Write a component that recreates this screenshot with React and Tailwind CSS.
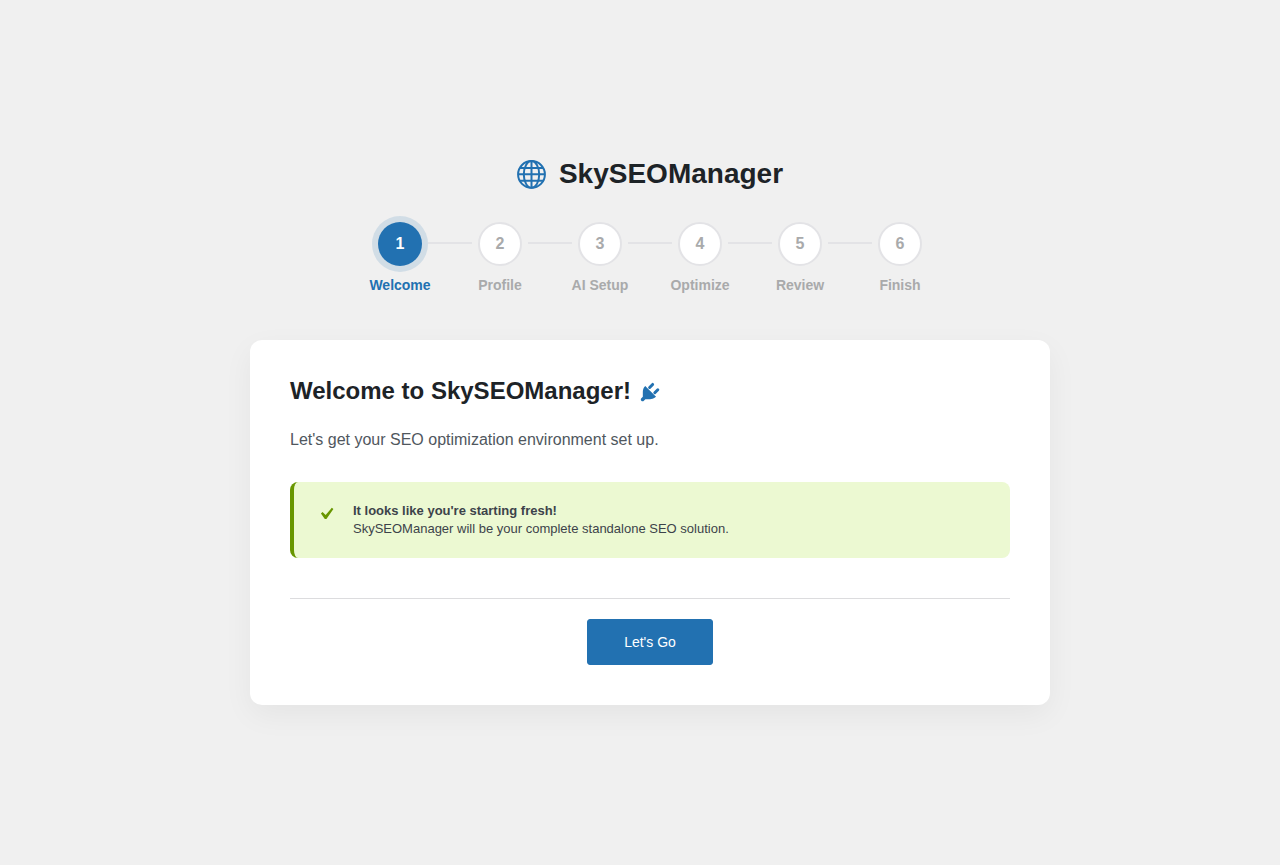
import React, { useState } from 'react';

const steps = ['Welcome', 'Profile', 'AI Setup', 'Optimize', 'Review', 'Finish'];

function GlobeIcon() {
    return (
        <svg width="30" height="32" viewBox="0 0 30 32" fill="none" stroke="#2271b1" strokeWidth="2" aria-hidden="true">
            <circle cx="14.5" cy="16.4" r="13.4" />
            <ellipse cx="14.5" cy="16.4" rx="7.7" ry="13.4" />
            <path d="M14.5 3v26.8M1 16.2h27M3 10h23M3 22.8h23" />
        </svg>
    );
}

function PlugIcon() {
    return (
        <svg width="24" height="24" viewBox="0 0 20 20" fill="#2271b1" aria-hidden="true">
            <path d="M5.11 6.13l.91-1.12 9.01 9.01-1.19.84c-.71.71-2.63 1.16-3.82 1.16H6.14L4.9 17.26c-.59.59-1.54.59-2.12 0-.59-.58-.59-1.53 0-2.12l1.24-1.24v-3.88c0-1.13.4-3.19 1.09-3.89z" />
            <path d="M9.7 6.2l2.5-2.5M14 10.6l2.5-2.5" stroke="#2271b1" strokeWidth="2.5" strokeLinecap="round" />
        </svg>
    );
}

function CheckIcon() {
    return (
        <svg className="shrink-0" width="24" height="24" viewBox="0 0 20 20" fill="#689600" aria-hidden="true">
            <path d="M14.83 4.89l1.34.94-5.81 8.38H9.02L5.78 9.67l1.34-1.25 2.57 2.4z" />
        </svg>
    );
}

function Step({ label, index, current }) {
    const active = index === current;
    const line = 'mt-5 h-0.5 flex-1';

    return (
        <li className="w-[100px]" aria-current={active ? 'step' : undefined}>
            <div className="flex items-start gap-1.5">
                <span className={line + (index > 0 ? ' bg-[#e3e3e6]' : '')}></span>
                <span
                    className={
                        'flex size-11 items-center justify-center rounded-full text-base font-bold ' +
                        (active
                            ? 'bg-[#2271b1] text-white shadow-[0_0_0_6px_rgba(34,113,177,0.15)]'
                            : 'border-2 border-[#e3e3e6] bg-white text-[#a9aaab]')
                    }
                >
                    {index + 1}
                </span>
                <span className={line + (index < steps.length - 1 ? ' bg-[#e3e3e6]' : '')}></span>
            </div>
            <p className={'mt-[9px] text-center text-sm font-bold ' + (active ? 'text-[#2271b1]' : 'text-[#a9aaab]')}>
                {label}
            </p>
        </li>
    );
}

export default function App() {
    const [current, setCurrent] = useState(0);

    const nextStep = function() {
        setCurrent(Math.min(current + 1, steps.length - 1));
    }

    return (
        <div className="flex min-h-screen flex-col items-center justify-center bg-[#f0f0f0] pb-0.5 pl-5 font-['Liberation_Sans',Arial,sans-serif]">
            <header className="mb-8 flex items-center gap-3 text-[#1d2327]">
                <GlobeIcon />
                <h1 className="text-[28px] leading-8 font-bold">SkySEOManager</h1>
            </header>

            <ol className="flex">
                {steps.map((label, index) => (
                    <Step key={label} label={label} index={index} current={current} />
                ))}
            </ol>

            <main className="mt-[45px] w-full max-w-[800px] rounded-xl bg-white p-10 shadow-[0_10px_30px_rgba(0,0,0,0.05)]">
                <h2 className="flex items-start gap-[7px] text-2xl leading-[22px] font-bold text-[#1d2327]">
                    Welcome to SkySEOManager!
                    <PlugIcon />
                </h2>
                <p className="mt-6 text-base text-[#50575e]">Let's get your SEO optimization environment set up.</p>

                <div className="mt-[30px] flex gap-[15px] rounded-lg border-l-4 border-[#689600] bg-[#ecf9d2] p-5">
                    <CheckIcon />
                    <div className="text-[13px] leading-[18px] text-[#3c434a]">
                        <strong className="block">It looks like you're starting fresh!</strong>
                        <p>SkySEOManager will be your complete standalone SEO solution.</p>
                    </div>
                </div>

                <div className="mt-10 flex justify-center border-t border-[#dcdcde] pt-5">
                    <button type="button" onClick={nextStep} className="cursor-pointer rounded-[3px] border border-[#2271b1] bg-[#2271b1] px-9 py-3 text-sm text-white">
                        Let's Go
                    </button>
                </div>
            </main>
        </div>
    )
}
